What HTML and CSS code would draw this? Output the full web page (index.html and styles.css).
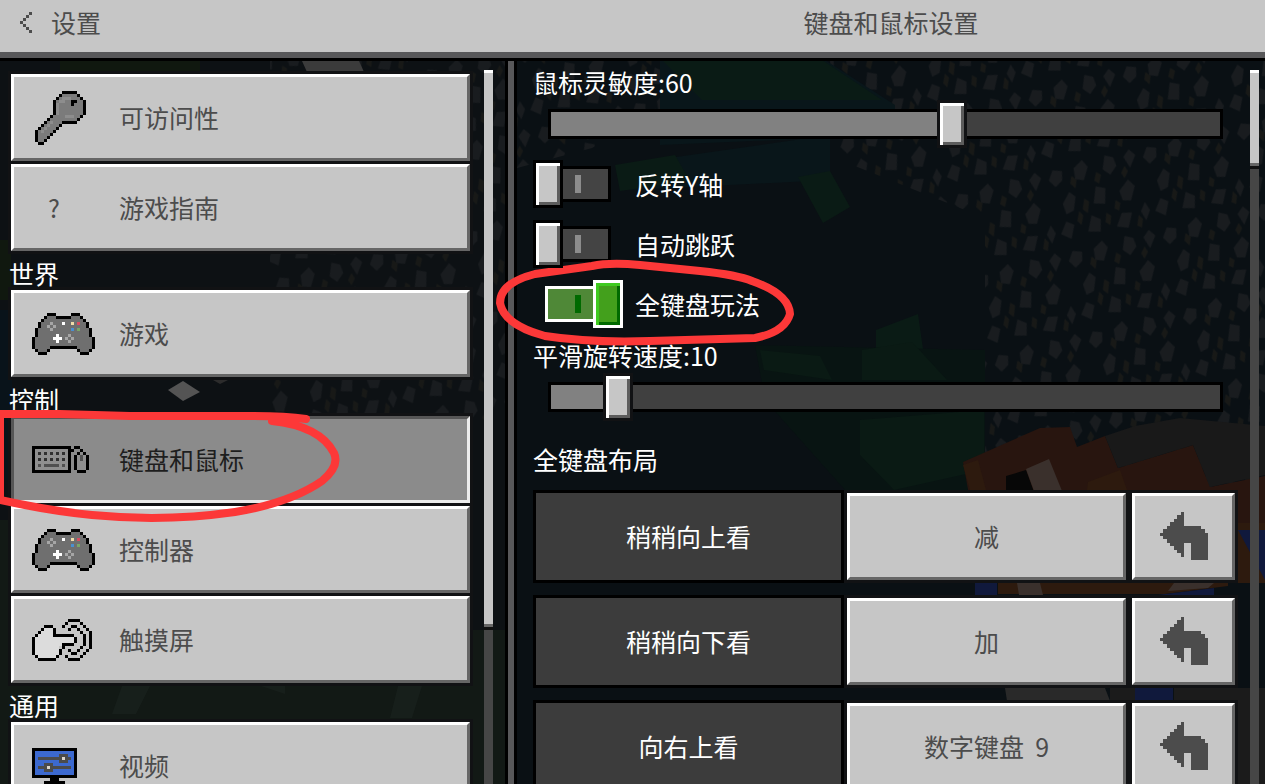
FILE: index.html
```html
<!DOCTYPE html>
<html lang="zh-CN">
<head>
    <meta charset="UTF-8">
    <meta name="viewport" content="width=device-width, initial-scale=1.0">
    <title>键盘和鼠标设置</title>
    <link rel="stylesheet" href="styles.css">
</head>
<body>
    <!-- shared pixel icons, one unit = one pixel of the artwork -->
    <svg class="sprite" aria-hidden="true">
        <symbol id="gamepad" viewBox="0 0 21 14">
            <path fill="#6f6f6f" d="M5 1h3v1h5v-1h3v1h1v1h1v2h1v3h1v4h-1v1h-3v-1h-1v-1h-9v1h-1v1h-3v-1h-1v-4h1v-3h1v-2h1v-1h1z"/>
            <path stroke="#000" d="M5 .5h3M13 .5h3M4 1.5h1M8 1.5h5M16 1.5h1M3 2.5h1M17 2.5h1M2.5 3v2M18.5 3v2M1.5 5v3M19.5 5v3M.5 8v4M20.5 8v4M6 11.5h9M1 12.5h1M5 12.5h1M15 12.5h1M19 12.5h1M2 13.5h3M16 13.5h3"/>
            <path stroke="#a6a6a6" d="M6 3.5h1M5 4.5h1M7 4.5h1M6 5.5h1M12 7.5h1M11 8.5h1M13 8.5h1M12 9.5h1"/>
            <path stroke="#fff" d="M10 3.5h1M8 7.5h1M7 8.5h3M8 9.5h1"/>
            <path stroke="#f1dca8" d="M13 3.5h1"/>
            <path stroke="#d84c60" d="M15 3.5h1"/>
            <path stroke="#4a8fd0" d="M13 5.5h1"/>
            <path stroke="#7aa568" d="M15 5.5h1"/>
        </symbol>
        <symbol id="undo" viewBox="0 0 14 14">
            <path fill="#4c4c4c" d="M6 0h1v4h5v1h1v1h1v8h-5v-5h-2v4h-1v-1h-1v-1h-1v-1h-1v-1h-1v-1h-1v-1h-1v-1h1v-1h1v-1h1v-1h1v-1h1v-1h1z"/>
        </symbol>
    </svg>

    <!-- cave scene behind the panels -->
    <svg class="scene" viewBox="0 0 1265 784" preserveAspectRatio="xMidYMid slice" aria-hidden="true">
        <defs>
            <pattern id="stone" width="97" height="83" patternUnits="userSpaceOnUse" patternTransform="rotate(-14)">
                <path fill="#191c1f" d="M4 14l6-9 9 3-2 9-8 5zM31 8l10-6 4 8-7 12-8-3zM59 16l5-13 8 4 1 9-8 7zM82 9l7-6 5 7-8 11zM12 40l9-10 5 6-5 13-8 2zM42 47l6-16 9 4-4 15zM70 41l11-9 5 8-7 13-8-2zM3 69l8-11 7 5-6 13zM30 73l7-15 8 6-3 12zM59 75l8-12 10 2-7 14zM86 66l6-8 3 9-6 9z"/>
                <path fill="#181917" d="M24 22l3-7 4 5-3 8zM48 25l4-8 4 4-4 8zM76 24l5-6 2 6-5 6zM30 50l4-10 4 4-4 11zM61 57l3-8 4 4-3 7zM22 60l4-9 3 5-4 9zM49 68l3-9 4 4-3 9zM79 79l4-10 3 5-3 8z"/>
            </pattern>
        </defs>
        <path fill="#0d1114" d="M0 0h1265v784h-1265z"/>
        <path fill="#10180f" d="M0 240h11v60h-11zM60 61h140v12h-140z"/>
        <path fill="#09131a" d="M0 310h12v170h-12z"/>
        <path fill="url(#stone)" d="M270 58h235v362h-235z"/>
        <path fill="#121915" d="M0 520h12v110h493v154h-505z"/>
        <path fill="#171f1b" d="M122 686h28l-14 28h-24zM398 686h24l-10 32h-22zM255 684h30v10z"/>
        <path fill="#3b3b3b" d="M302 61h57l5 11h-57z"/>
        <path fill="#545454" d="M168 390l15-9 17 11-17 9z"/>
        <path fill="#2c2c2c" d="M213 380h15l-8 4z"/>
        <path fill="#0a1014" d="M514 58h751v726h-751z"/>
        <path fill="url(#stone)" d="M517 58h145v50l-70 40-75 20zM830 58h435v440h-280v-280l-150-60z"/>
        <path fill="#09161a" d="M660 60h165l70 45v30l-235 10zM620 165l210-30v45l-200 10z"/>
        <path fill="#0a1b15" d="M662 60h160l60 40h-180zM615 165l60-10 15 26-70 10zM798 177l32-6 20 36-27 16zM876 330l42-16 5 35h-47z"/>
        <path fill="#081412" d="M755 345l230 5v140h-140l-80-90z"/>
        <path fill="#0a1a14" d="M760 350l60 6 12 24-68-10zM862 350l50-8 35 38h-85zM860 420l124-10v60l-90 20-34-35z"/>
        <path fill="#28150f" d="M963 462l77-34 30-1 7 20 28-11 13 32 75-23 17 42 55-11v52h-290z"/>
        <path fill="#2d1a0e" d="M963 465l15-5 8 30h-16zM1088 482l32-12 7 20h-40z"/>
        <path fill="#191919" d="M1105 436l30-10 45-8 85 8v49l-55 12-17-42-75 23z"/>
        <path fill="#070707" d="M1006 476l20-6 8 22h-28z"/>
        <path fill="#3a302c" d="M1026 469l23-10 13 32h-28z"/>
        <path fill="#2d1a0e" d="M998 583h267v-60h-27l-10 60v3l-63 8h-167z"/>
        <path fill="#10193c" d="M1238 530h27v50zM975 583h22v12h-22zM1150 596l64-8v8zM1135 688h38v12h-38z"/>
        <path fill="#3a302c" d="M1017 583h23l3 12h-24zM1168 591l6-8h40l-6 5z"/>
        <path fill="#292929" d="M1005 688h100l5 13h-103z"/>
        <path fill="#1b1b1b" d="M1110 688h25v12h-25zM1174 688h91v96h-27v-84h-64z"/>
    </svg>

    <header class="top-bar">
        <button class="back-button" type="button">
            <svg class="chevron" viewBox="0 0 4 7" aria-hidden="true">
                <path stroke="#4c4c4c" d="M3 .5h1M2 1.5h1M1 2.5h1M0 3.5h1M1 4.5h1M2 5.5h1M3 6.5h1"/>
            </svg>
            设置
        </button>
        <h1>键盘和鼠标设置</h1>
    </header>

    <div class="screen">
        <div class="sidebar">
            <nav class="menu">
                <button class="menu-item" type="button">
                    <svg class="icon" viewBox="-1 0 21 18" aria-hidden="true">
                        <path fill="#7b7b7b" d="M9 1h5v1h1v1h1v5h-1v1h-1v1h-5v1h-1v1h-1v1h-1v1h-1v1h-1v1h-1v1h-2v-4h1v-1h1v-1h1v-1h1v-1h1v-1h1v-5h1v-1h1z"/>
                        <path stroke="#8d8d8d" d="M9 2.5h3M8 3.5h2M7.5 4v4M10 8.5h3M5 10.5h1M4 11.5h1M3 12.5h1M2 13.5h1"/>
                        <path stroke="#000" d="M9 .5h5M8 1.5h1M14 1.5h1M7 2.5h1M15 2.5h1M6.5 3v5M16.5 3v5M15 8.5h1M14 9.5h1M9 10.5h5M5 8.5h1M4 9.5h1M3 10.5h1M2 11.5h1M1 12.5h1M.5 13v4M1 17.5h2M3 16.5h1M4 15.5h1M5 14.5h1M6 13.5h1M7 12.5h1M8 11.5h1M12 3.5h2M12 4.5h1"/>
                    </svg>
                    <span>可访问性</span>
                </button>
                <button class="menu-item" type="button">
                    <span class="icon question">?</span>
                    <span>游戏指南</span>
                </button>
                <h2>世界</h2>
                <button class="menu-item" type="button">
                    <svg class="icon" viewBox="0 0 21 14" aria-hidden="true"><use href="#gamepad"/></svg>
                    <span>游戏</span>
                </button>
                <h2>控制</h2>
                <button class="menu-item selected" type="button">
                    <svg class="icon" viewBox="0 0 21 9" aria-hidden="true">
                        <path fill="#8f8f8f" d="M1 1h11v7h-11zM15 3h3v5h-3z"/>
                        <path fill="none" stroke="#000" d="M.5 .5h12v8h-12zM14 .5h2M13 1.5h1M16 1.5h1M15 2.5h1M17 2.5h1M14.5 3v5M18.5 3v5M15 8.5h3"/>
                        <path stroke="#303030" d="M2 2.5h1M4 2.5h1M6 2.5h1M8 2.5h1M10 2.5h1M2 4.5h1M4 4.5h1M6 4.5h1M8 4.5h1M10 4.5h1"/>
                        <path stroke="#505050" d="M2 6.5h1M4 6.5h5M10 6.5h1M16.5 3v2"/>
                    </svg>
                    <span>键盘和鼠标</span>
                </button>
                <button class="menu-item" type="button">
                    <svg class="icon" viewBox="0 0 21 14" aria-hidden="true"><use href="#gamepad"/></svg>
                    <span>控制器</span>
                </button>
                <button class="menu-item" type="button">
                    <svg class="icon" viewBox="0 0 21 14" aria-hidden="true">
                        <path fill="#dcdcdc" d="M4 3h3v3h7v2h-4v1h-1v3h-1v1h-6v-1h-1v-6h1v-1h1v-1h1z"/>
                        <path stroke="#000" d="M4 2.5h3M3 3.5h1M7 3.5h1M2 4.5h1M7 4.5h1M1 5.5h1M7 5.5h7M.5 6v6M1 12.5h1M2 13.5h6M8 12.5h1M9.5 10v2M10 9.5h1M10 8.5h4M14.5 6v2"/>
                        <path stroke="#000" d="M12 .5h4M11 1.5h1M16 1.5h1M10 2.5h1M17 2.5h1M18 3.5h1M19.5 4v6M18.5 10v1M17 11.5h1M16 12.5h1M12 13.5h4M11 12.5h1M13 2.5h2M12 3.5h1M15 3.5h1M16 4.5h1M17.5 5v4M16 9.5h1M15 10.5h1M13 11.5h2M12 10.5h1"/>
                    </svg>
                    <span>触摸屏</span>
                </button>
                <h2>通用</h2>
                <button class="menu-item" type="button">
                    <svg class="icon" viewBox="0 0 21 12" aria-hidden="true">
                        <path fill="#000" d="M0 0h15v10h-6v1h2v1h-7v-1h2v-1h-6z"/>
                        <path fill="#3c69cf" d="M1 1h13v8h-13z"/>
                        <path fill="#4b4b4b" d="M2 3h11v1h-11zM2 6h11v1h-11zM9 2h3v3h-3zM4 5h3v3h-3z"/>
                        <path stroke="#dcd6cc" d="M10 3.5h1M5 6.5h1"/>
                    </svg>
                    <span>视频</span>
                </button>
            </nav>
            <div class="scrollbar"><div class="scroll-thumb" style="height: 78%"></div></div>
        </div>

        <div class="divider"></div>

        <main class="content">
            <div class="options">
                <label class="slider-label" for="sensitivity">鼠标灵敏度:60</label>
                <input class="slider" type="range" id="sensitivity" min="0" max="100" value="60" style="--fill: 60%">

                <div class="toggles">
                    <label class="toggle"><input type="checkbox"> 反转Y轴</label>
                    <label class="toggle"><input type="checkbox"> 自动跳跃</label>
                    <label class="toggle"><input type="checkbox" checked> 全键盘玩法</label>
                </div>

                <label class="slider-label" for="rotation">平滑旋转速度:10</label>
                <input class="slider" type="range" id="rotation" min="0" max="100" value="10" style="--fill: 10%">

                <h2 class="bindings-title">全键盘布局</h2>
                <div class="bindings">
                    <div class="binding">
                        <div class="binding-name">稍稍向上看</div>
                        <button class="key-button" type="button">减</button>
                        <button class="key-button" type="button" aria-label="重置"><svg class="undo"><use href="#undo"/></svg></button>
                    </div>
                    <div class="binding">
                        <div class="binding-name">稍稍向下看</div>
                        <button class="key-button" type="button">加</button>
                        <button class="key-button" type="button" aria-label="重置"><svg class="undo"><use href="#undo"/></svg></button>
                    </div>
                    <div class="binding">
                        <div class="binding-name">向右上看</div>
                        <button class="key-button" type="button">数字键盘&nbsp; 9</button>
                        <button class="key-button" type="button" aria-label="重置"><svg class="undo"><use href="#undo"/></svg></button>
                    </div>
                </div>
            </div>
            <div class="scrollbar"><div class="scroll-thumb" style="height: 13.5%"></div></div>
        </main>
    </div>

    <!-- red pen marks -->
    <svg class="marks" width="800" height="530" aria-hidden="true">
        <path d="M306 419Q285 416 250 416L130 416L60 414L0 414V500Q50 511 92 515Q165 522 235 512Q290 503 322 481Q340 466 334 453Q320 426 272 421"/>
        <path d="M752 281Q738 275 700 271L640 265Q610 262 592 266L535 274Q500 283 500 303Q504 325 545 336Q590 343 650 341L755 338Q785 332 790 314Q789 294 752 281"/>
    </svg>
</body>
</html>
```
FILE: styles.css
```css
*,
*::before,
*::after {
    box-sizing: border-box;
}

body {
    margin: 0;
    height: 100vh;
    display: flex;
    flex-direction: column;
    overflow: hidden;
    background-color: #0d1114;
    color: #fff;
    font-family: "Noto Sans CJK SC", "Noto Sans", sans-serif;
    font-size: 25px;
    line-height: 28px;
}

h1,
h2 {
    margin: 0;
    font-size: 25px;
    font-weight: 400;
}

button {
    font: inherit;
    color: #4c4c4c;
    cursor: pointer;
}

svg {
    shape-rendering: crispEdges;
}

/* Backdrop */
.sprite {
    position: absolute;
    width: 0;
    height: 0;
}
.scene {
    position: absolute;
    z-index: -1;
    width: 100%;
    height: 100%;
    shape-rendering: auto;
}

/* Header */
.top-bar,
.screen {
    display: grid;
    grid-template-columns: 505fr 12px 748fr;
}
.top-bar {
    height: 58px;
    padding-bottom: 8px;
    align-items: center;
    background-color: #c6c6c6;
    border-bottom: 6px solid #58585a;
    color: #4c4c4c;
}
.top-bar h1 {
    grid-column: 3;
    text-align: center;
}
.back-button {
    display: flex;
    align-items: center;
    gap: 19px;
    padding: 0 20px;
    border: none;
    background: none;
}
.chevron {
    width: 12px;
    height: 21px;
}

.screen {
    flex: 1;
    min-height: 0;
    border-top: 3px solid #000;
}
.divider {
    background-color: #58585a;
    border: solid #000;
    border-width: 0 3px;
}

/* Left menu */
.sidebar {
    display: flex;
    gap: 14px;
    min-height: 0;
    padding: 0 12px 0 11px;
    overflow: hidden;
}
.menu {
    flex: 1;
    display: flex;
    flex-direction: column;
    gap: 3px;
    padding-top: 13px;
}
.menu h2 {
    flex: none;
    height: 33px;
    padding-top: 5px;
    margin-left: -2px;
}
.menu-item,
.key-button {
    background-color: #c6c6c6;
    border: 3px solid;
    border-color: #fff #666 #666 #fff;
    box-shadow: 0 0 0 3px #111214;
}
.menu-item {
    flex: none;
    display: flex;
    align-items: center;
    gap: 24px;
    height: 87px;
    padding: 0 18px;
}
.menu-item span {
    padding-bottom: 2px;
}
.menu-item.selected {
    background-color: #8b8b8b;
    border-color: #565656 #ebebeb #ebebeb #565656;
    color: #1e1e1e;
}
.icon {
    width: 63px;
}
.question {
    padding-left: 16px;
    text-align: left;
}

/* Scrollbars */
.scrollbar {
    flex: none;
    width: 9px;
    margin-top: 9px;
    background-color: #464646;
}
.scroll-thumb {
    background-color: #c6c6c6;
    border-top: 3px solid #fff;
    border-bottom: 3px solid #666;
    box-shadow: 0 3px #111;
}

/* Right side options */
.content {
    display: flex;
    gap: 12px;
    min-height: 0;
    padding: 0 6px 0 16px;
    overflow: hidden;
}
.options {
    flex: 1;
    display: flex;
    flex-direction: column;
    padding-top: 7px;
}
.options > * {
    flex: none;
}

.slider {
    appearance: none;
    height: 48px;
    margin: 4px 3px 0;
    background:
        linear-gradient(90deg, #818181 var(--fill), #404040 var(--fill)) center / calc(100% - 30px) 24px no-repeat,
        linear-gradient(#000, #000) center / calc(100% - 24px) 30px no-repeat;
}
.slider::-webkit-slider-thumb {
    appearance: none;
    width: 30px;
    height: 48px;
    border: 3px solid #111214;
    background-color: #c6c6c6;
    box-shadow: inset 3px 3px #fff, inset -3px -3px #5c5c5c;
}

.toggles {
    display: flex;
    flex-direction: column;
    gap: 12px;
    padding: 12px 0 13px;
}
.toggle {
    display: flex;
    align-items: center;
    gap: 12px;
}
.toggle input {
    appearance: none;
    display: flex;
    align-items: center;
    width: 90px;
    height: 48px;
    margin: 0;
}
.toggle input::before {
    content: "";
    z-index: 1;
    width: 30px;
    height: 48px;
    border: 3px solid #000;
    background-color: #c6c6c6;
    box-shadow: inset 3px 3px #fff, inset -3px -3px #5c5c5c;
}
.toggle input::after {
    content: "";
    width: 51px;
    height: 36px;
    margin-left: -3px;
    border: 3px solid #000;
    background: linear-gradient(#8c8c8c, #8c8c8c) 12px center / 6px 18px no-repeat #444;
}
.toggle input:checked {
    flex-direction: row-reverse;
}
.toggle input:checked::before {
    margin-left: -3px;
    border-color: #fff;
    background-color: #43a01c;
    box-shadow: inset 3px 3px #3fcb20, inset -3px -3px #006a00;
}
.toggle input:checked::after {
    margin-left: 0;
    border-color: #fff;
    background: linear-gradient(#006a00, #006a00) 27px center / 6px 18px no-repeat #4f8837;
}

/* Key bindings */
.bindings-title {
    margin: 24px 0 17px;
}
.bindings {
    display: flex;
    flex-direction: column;
    gap: 12px;
}
.binding {
    display: grid;
    grid-template-columns: 308fr 279fr 103fr;
    gap: 6px;
    height: 93px;
    padding-right: 3px;
    align-items: center;
}
.binding-name {
    height: 93px;
    margin-right: -3px;
    padding-bottom: 2px;
    display: flex;
    align-items: center;
    justify-content: center;
    border: 3px solid #000;
    background-color: #3c3c3c;
}
.key-button {
    height: 87px;
    padding: 0 0 2px;
}
.undo {
    display: block;
    width: 48px;
    height: 48px;
    margin: 0 auto;
}

/* Pen marks over the page */
.marks {
    position: absolute;
    top: 0;
    left: 0;
    fill: none;
    stroke: #fc3838;
    stroke-width: 8px;
    stroke-linecap: round;
    stroke-linejoin: round;
    shape-rendering: auto;
    pointer-events: none;
}
```
